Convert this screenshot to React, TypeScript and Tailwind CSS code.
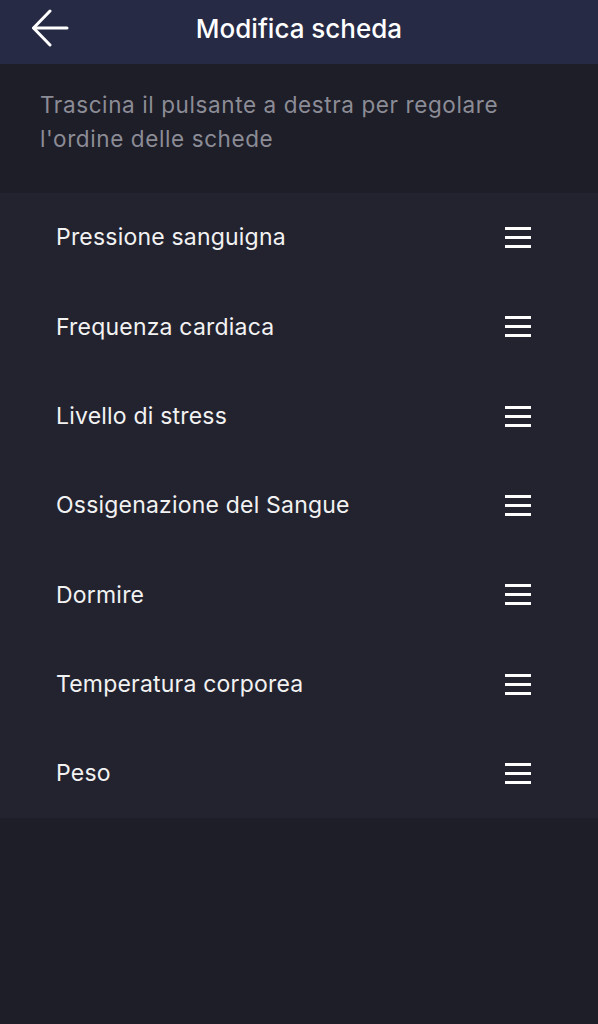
import React from "react";

const items = [
  "Pressione sanguigna",
  "Frequenza cardiaca",
  "Livello di stress",
  "Ossigenazione del Sangue",
  "Dormire",
  "Temperatura corporea",
  "Peso",
];

function Handle() {
  return (
    <div className="flex w-[26px] flex-col gap-[6px]">
      <div className="h-[3px] w-full bg-white" />
      <div className="h-[3px] w-full bg-white" />
      <div className="h-[3px] w-full bg-white" />
    </div>
  );
}

export default function App() {
  return (
    <div
      className="flex min-h-[1024px] w-full flex-col bg-[#1e1e28]"
      style={{ fontFamily: "Inter, Roboto, sans-serif" }}
    >
      <header className="relative flex h-[64px] items-center justify-center bg-[#272a45]">
        <button className="absolute left-[30px] top-[8px] flex h-[40px] w-[40px] items-center justify-center">
          <svg width="38" height="38" viewBox="0 0 38 38" fill="none" stroke="white" strokeWidth="3" strokeLinecap="round" strokeLinejoin="round">
            <path d="M36 19H3" />
            <path d="M19 2L2.5 19L19 36" />
          </svg>
        </button>
        <h1 className="mt-[-8px] text-[26px] font-medium text-white">Modifica scheda</h1>
      </header>
      <div className="px-[40px] pb-[37px] pt-[24px] text-[22.5px] leading-[34px] tracking-[0.6px] text-[#8c8c96]">
        Trascina il pulsante a destra per regolare
        <br />
        l'ordine delle schede
      </div>
      <div className="flex flex-col bg-[#232330]">
        {items.map((t) => (
          <div key={t} className="flex h-[89.3px] items-center justify-between pl-[56px] pr-[67px]">
            <span className="text-[23px] tracking-[0.2px] text-[#f2f2f2]">{t}</span>
            <Handle />
          </div>
        ))}
      </div>
    </div>
  );
}
